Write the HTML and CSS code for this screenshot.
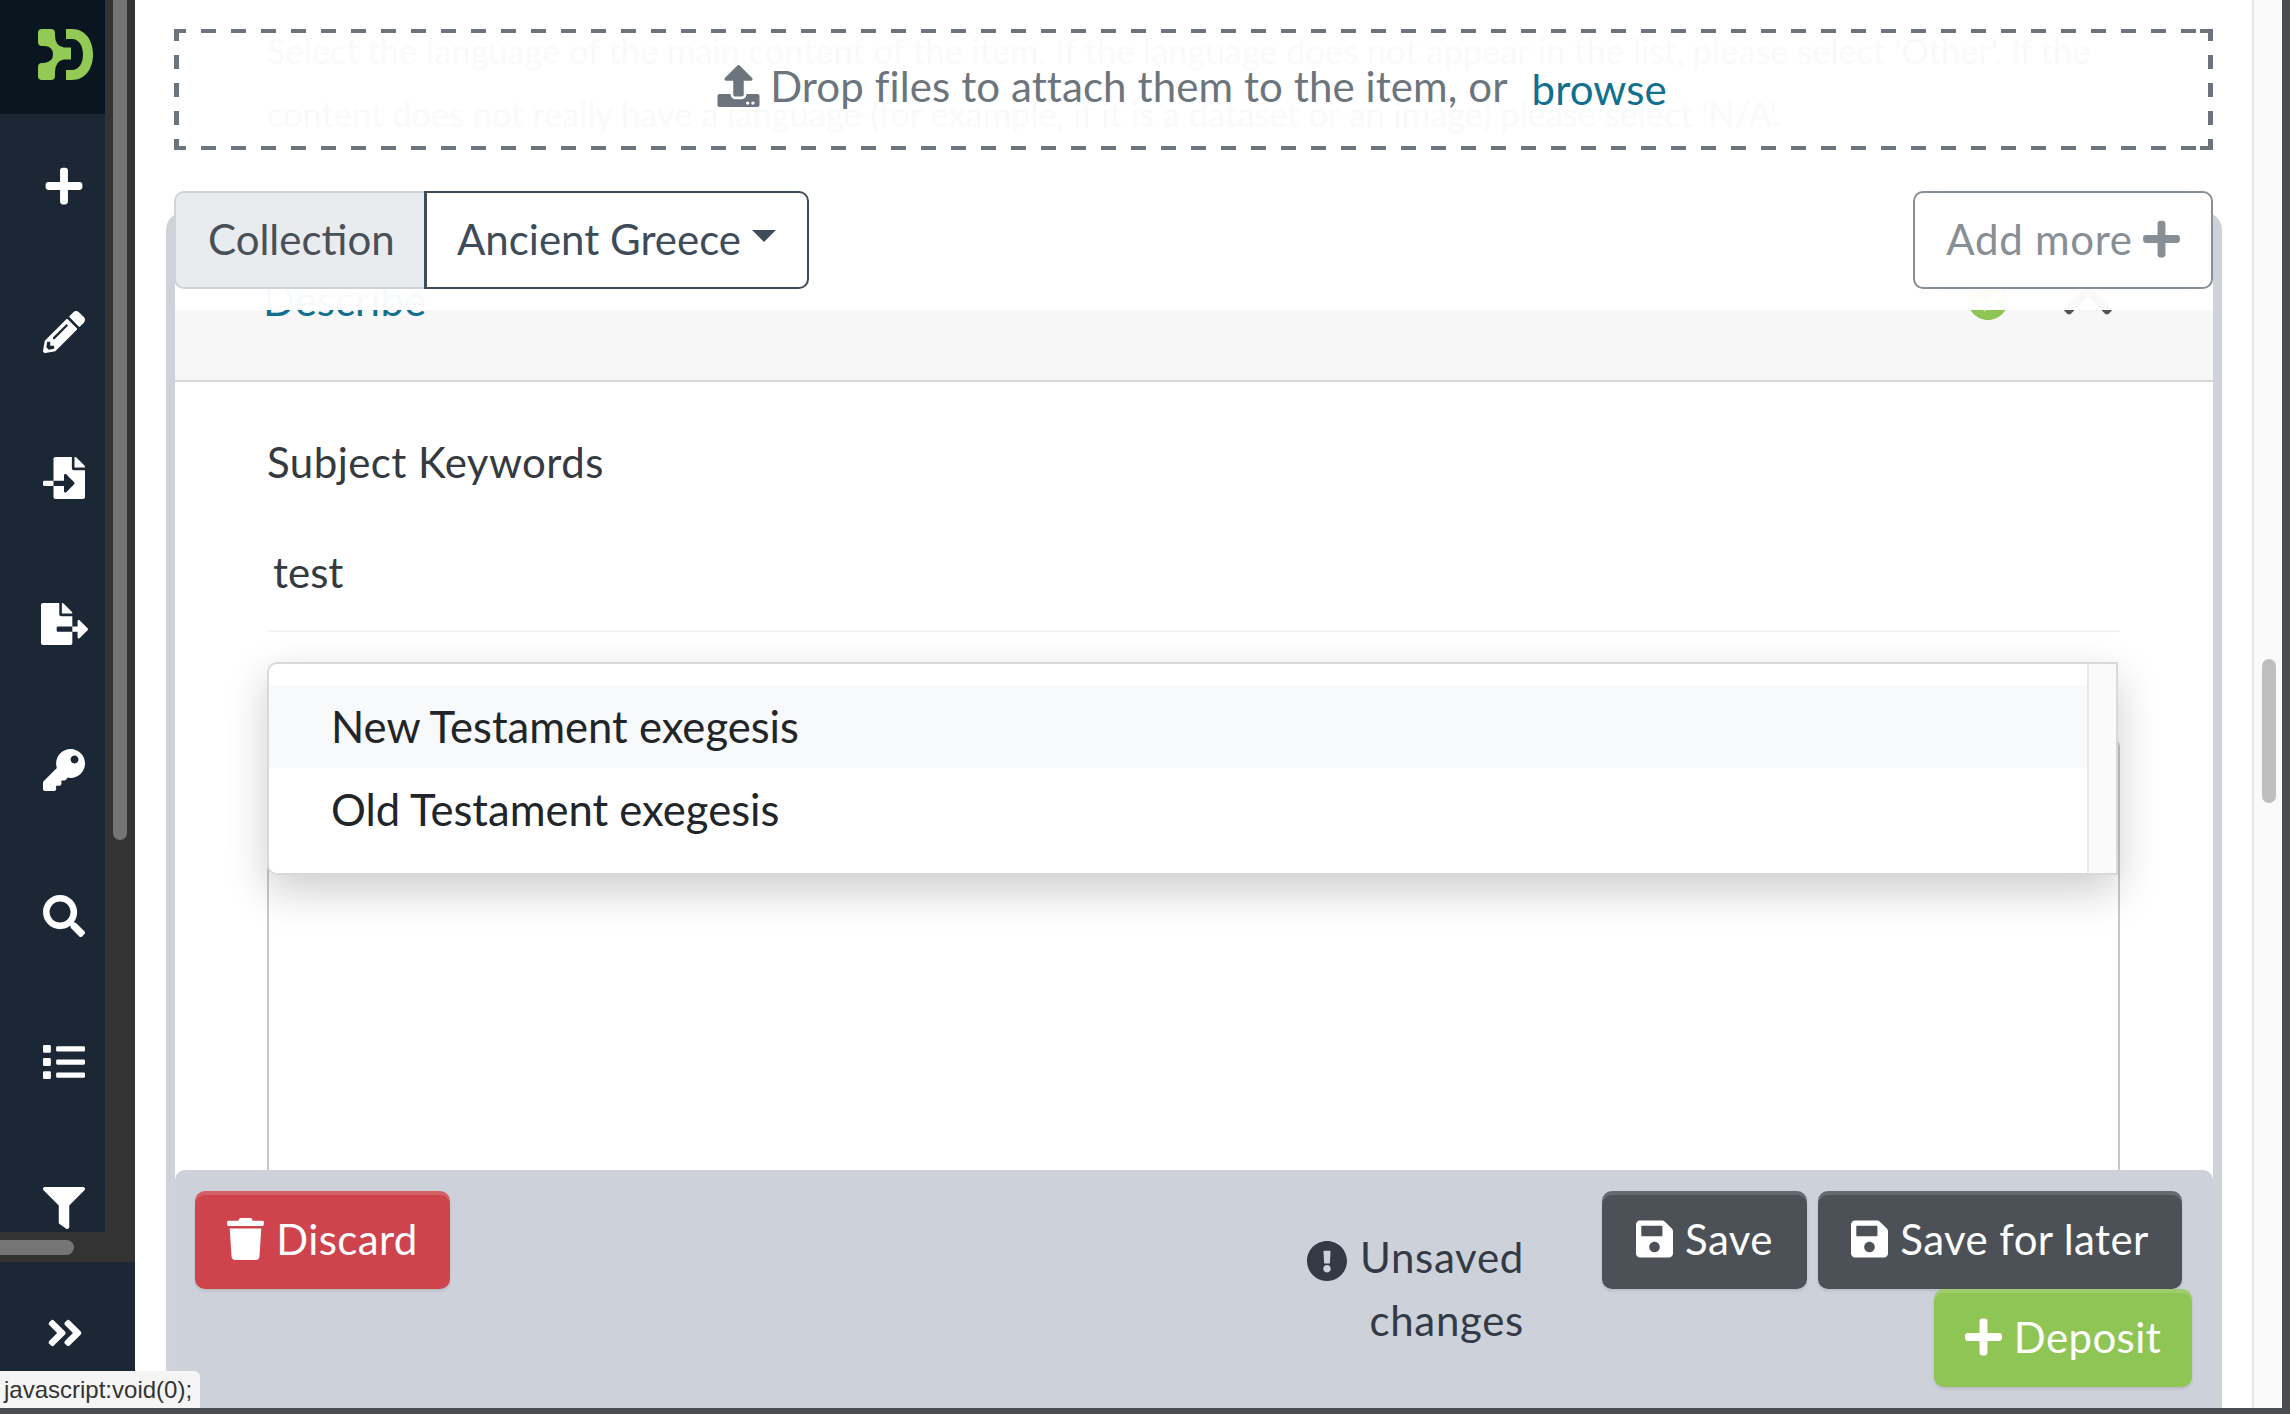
FILE: index.html
```html
<!DOCTYPE html>
<html lang="en">
<head>
	<title>Deposit item</title>
	<meta charset="utf-8">
	<link rel="stylesheet" href="styles.css">
</head>
<body>
	<div class="window">
		<aside class="sidebar">
			<div class="nav-pane">
				<nav class="nav-col">
					<div class="logo">
						<svg class="logo-mark" viewBox="38 28 56 53"><path d="M42 29H51Q55 29 55 33V36Q55 46 64 47.500H71V59.500H64Q55 61 55 72V76Q55 80 51 80H42Q38 80 38 76V67Q38 63 42 63H44Q53 62 53 54.500Q53 46 44 46H42Q38 46 38 42V33Q38 29 42 29Z"/><path d="M66 29H72C85 29 93 40 93 54.500C93 69 85 80 72 80H66V70H72C79 70 83 63 83 54.500C83 46 79 39 72 39H66Z"/></svg>
					</div>
					<ul class="nav-list">
						<li><svg class="nav-icon" viewBox="0 0 448 512"><path d="M416 208H272V64c0-17.670-14.330-32-32-32h-32c-17.670 0-32 14.330-32 32v144H32c-17.670 0-32 14.330-32 32v32c0 17.670 14.330 32 32 32h144v144c0 17.670 14.330 32 32 32h32c17.670 0 32-14.330 32-32V304h144c17.670 0 32-14.330 32-32v-32c0-17.670-14.330-32-32-32z"/></svg></li>
						<li><svg class="nav-icon" viewBox="0 0 512 512"><path d="M497.900 142.100l-46.100 46.100c-4.700 4.700-12.300 4.700-17 0l-111-111c-4.700-4.700-4.700-12.300 0-17l46.100-46.100c18.700-18.700 49.100-18.700 67.900 0l60.100 60.100c18.800 18.700 18.800 49.100 0 67.900zM284.200 99.800L21.600 362.400.4 483.900c-2.900 16.400 11.400 30.600 27.800 27.800l121.500-21.300 262.600-262.600c4.700-4.700 4.700-12.300 0-17l-111-111c-4.800-4.700-12.400-4.700-17.100 0zM124.100 339.900c-5.500-5.500-5.500-14.300 0-19.800l154-154c5.500-5.500 14.300-5.500 19.800 0s5.500 14.300 0 19.800l-154 154c-5.500 5.500-14.300 5.500-19.800 0zM88 424h48v36.300l-64.500 11.300-31.100-31.100L51.700 376H88v48z"/></svg></li>
						<li><svg class="nav-icon" viewBox="0 0 512 512"><path d="M16 288c-8.800 0-16 7.200-16 16v32c0 8.800 7.200 16 16 16h112v-64zm489-183L407.100 7c-4.500-4.500-10.600-7-17-7H384v128h128v-6.100c0-6.300-2.500-12.400-7-16.900zm-153 31V0H152c-13.300 0-24 10.700-24 24v264h128v-65.200c0-14.300 17.300-21.400 27.400-11.300L379 308c6.600 6.700 6.600 17.400 0 24l-95.700 96.400c-10.100 10.100-27.400 3-27.400-11.300V352H128v136c0 13.300 10.700 24 24 24h336c13.300 0 24-10.700 24-24V160H376c-13.200 0-24-10.800-24-24z"/></svg></li>
						<li><svg class="nav-icon wide" viewBox="0 0 576 512"><path d="M384 121.900c0-6.300-2.500-12.400-7-16.900L279.100 7c-4.500-4.500-10.600-7-17-7H256v128h128zM571 308l-95.700-96.400c-10.100-10.100-27.400-3-27.400 11.300V288h-64v64h64v65.200c0 14.300 17.300 21.400 27.400 11.300L571 332c6.600-6.600 6.600-17.400 0-24zm-379 28v-32c0-8.800 7.200-16 16-16h176V160H248c-13.200 0-24-10.800-24-24V0H24C10.700 0 0 10.700 0 24v464c0 13.300 10.700 24 24 24h336c13.300 0 24-10.700 24-24V352H208c-8.800 0-16-7.200-16-16z"/></svg></li>
						<li><svg class="nav-icon" viewBox="0 0 512 512"><path d="M512 176.001C512 273.203 433.202 352 336 352c-11.220 0-22.190-1.062-32.827-3.069l-24.012 27.014A23.999 23.999 0 0 1 261.223 384H224v40c0 13.255-10.745 24-24 24h-40v40c0 13.255-10.745 24-24 24H24c-13.255 0-24-10.745-24-24v-78.059c0-6.365 2.529-12.470 7.029-16.971l161.802-161.802C163.108 213.814 160 195.271 160 176 160 78.798 238.797.001 335.999 0 433.488-.001 512 78.511 512 176.001zM336 128c0 26.510 21.490 48 48 48s48-21.490 48-48-21.490-48-48-48-48 21.490-48 48z"/></svg></li>
						<li><svg class="nav-icon" viewBox="0 0 512 512"><path d="M505 442.700L405.300 343c-4.500-4.500-10.600-7-17-7H372c27.600-35.300 44-79.700 44-128C416 93.100 322.900 0 208 0S0 93.100 0 208s93.100 208 208 208c48.300 0 92.700-16.400 128-44v16.300c0 6.400 2.500 12.500 7 17l99.700 99.700c9.400 9.400 24.600 9.400 33.900 0l28.300-28.300c9.400-9.400 9.400-24.600.1-34zM208 336c-70.700 0-128-57.200-128-128 0-70.700 57.200-128 128-128 70.700 0 128 57.200 128 128 0 70.700-57.200 128-128 128z"/></svg></li>
						<li><svg class="nav-icon" viewBox="0 0 512 512"><path d="M80 368H16a16 16 0 0 0-16 16v64a16 16 0 0 0 16 16h64a16 16 0 0 0 16-16v-64a16 16 0 0 0-16-16zm0-320H16A16 16 0 0 0 0 64v64a16 16 0 0 0 16 16h64a16 16 0 0 0 16-16V64a16 16 0 0 0-16-16zm0 160H16a16 16 0 0 0-16 16v64a16 16 0 0 0 16 16h64a16 16 0 0 0 16-16v-64a16 16 0 0 0-16-16zm416 176H176a16 16 0 0 0-16 16v32a16 16 0 0 0 16 16h320a16 16 0 0 0 16-16v-32a16 16 0 0 0-16-16zm0-320H176a16 16 0 0 0-16 16v32a16 16 0 0 0 16 16h320a16 16 0 0 0 16-16V80a16 16 0 0 0-16-16zm0 160H176a16 16 0 0 0-16 16v32a16 16 0 0 0 16 16h320a16 16 0 0 0 16-16v-32a16 16 0 0 0-16-16z"/></svg></li>
						<li><svg class="nav-icon" viewBox="0 0 512 512"><path d="M487.976 0H24.028C2.710 0-8.047 25.866 7.058 40.971L192 225.941V432c0 7.831 3.821 15.170 10.237 19.662l80 55.980C298.020 518.690 320 507.493 320 487.980V225.941l184.947-184.970C520.021 25.896 509.338 0 487.976 0z"/></svg></li>
					</ul>
				</nav>
				<div class="nav-scroll-v"><div class="nav-thumb-v"></div></div>
				<div class="nav-scroll-h"><div class="nav-thumb-h"></div></div>
			</div>
			<div class="nav-foot">
				<svg class="nav-icon collapse" viewBox="0 0 448 512"><path d="M224.300 273l-136 136c-9.400 9.400-24.600 9.400-33.900 0l-22.600-22.600c-9.400-9.400-9.400-24.600 0-33.900l96.400-96.400-96.400-96.400c-9.400-9.400-9.400-24.600 0-33.900L54.300 103c9.400-9.400 24.600-9.400 33.900 0l136 136c9.500 9.400 9.500 24.600.1 34zm192-34l-136-136c-9.400-9.400-24.600-9.400-33.900 0l-22.600 22.600c-9.400 9.400-9.400 24.600 0 33.900l96.400 96.400-96.400 96.400c-9.400 9.400-9.400 24.600 0 33.900l22.600 22.600c9.400 9.400 24.600 9.400 33.900 0l136-136c9.400-9.200 9.400-24.400 0-33.800z"/></svg>
			</div>
		</aside>

		<main class="content">
			<div class="dropzone">
				<p class="ghost-copy">Select the language of the main content of the item. If the language does not appear in the list, please select 'Other'. If the<br>content does not really have a language (for example, if it is a dataset or an image) please select 'N/A'.</p>
				<div class="drop-label">
					<svg class="drop-icon" viewBox="0 0 512 512"><path d="M296 384h-80c-13.300 0-24-10.700-24-24V192h-87.700c-17.800 0-26.700-21.500-14.100-34.100L242.300 5.700c7.500-7.500 19.800-7.500 27.300 0l152.200 152.200c12.600 12.600 3.700 34.100-14.100 34.100H320v168c0 13.300-10.700 24-24 24zm216-8v112c0 13.300-10.700 24-24 24H24c-13.300 0-24-10.700-24-24V376c0-13.300 10.700-24 24-24h136v8c0 30.900 25.100 56 56 56h80c30.900 0 56-25.100 56-56v-8h136c13.300 0 24 10.700 24 24zm-124 88c0-11-9-20-20-20s-20 9-20 20 9 20 20 20 20-9 20-20zm64 0c0-11-9-20-20-20s-20 9-20 20 9 20 20 20 20-9 20-20z"/></svg>
					<span>Drop files to attach them to the item, or</span>
					<a class="browse">browse</a>
				</div>
			</div>

			<div class="toolbar">
				<div class="collection-group">
					<span class="group-label">Collection</span>
					<button class="group-select">Ancient Greece<i class="caret"></i></button>
				</div>
				<button class="add-more">Add more<svg class="add-icon" viewBox="0 0 448 512"><path d="M416 208H272V64c0-17.670-14.330-32-32-32h-32c-17.670 0-32 14.330-32 32v144H32c-17.670 0-32 14.330-32 32v32c0 17.670 14.330 32 32 32h144v144c0 17.670 14.330 32 32 32h32c17.670 0 32-14.330 32-32V304h144c17.670 0 32-14.330 32-32v-32c0-17.670-14.330-32-32-32z"/></svg></button>
			</div>

			<section class="panel">
				<div class="veil"></div>
				<header class="panel-head">
					<a class="panel-title">Describe</a>
					<svg class="head-check" viewBox="8 8 496 496"><path d="M504 256c0 136.967-111.033 248-248 248S8 392.967 8 256 119.033 8 256 8s248 111.033 248 248zM227.314 387.314l184-184c6.248-6.248 6.248-16.379 0-22.627l-22.627-22.627c-6.248-6.249-16.379-6.249-22.628 0L216 308.118l-70.059-70.059c-6.248-6.248-16.379-6.248-22.628 0l-22.627 22.627c-6.248 6.248-6.248 16.379 0 22.627l104 104c6.249 6.250 16.379 6.250 22.628.001z"/></svg>
					<svg class="head-chevron" viewBox="0 120 448 272"><path d="M240.971 130.524l194.343 194.343c9.373 9.373 9.373 24.569 0 33.941l-22.667 22.667c-9.357 9.357-24.522 9.375-33.901.04L224 227.495 69.255 381.516c-9.379 9.335-24.544 9.317-33.901-.04l-22.667-22.667c-9.373-9.373-9.373-24.569 0-33.941L207.030 130.525c9.372-9.373 24.568-9.373 33.941-.001z"/></svg>
				</header>
				<div class="panel-body">
					<label class="field-label">Subject Keywords</label>
					<div class="tag-field">
						<span class="tag-value">test</span>
						<ul class="suggestions">
							<li class="active">New Testament exegesis</li>
							<li>Old Testament exegesis</li>
						</ul>
					</div>
					<div class="text-box"></div>
				</div>
				<footer class="action-bar">
					<button class="btn btn-discard"><svg class="btn-icon" viewBox="0 0 448 512"><path d="M432 32H312l-9.400-18.700A24 24 0 0 0 281.100 0H166.800a23.720 23.720 0 0 0-21.400 13.300L136 32H16A16 16 0 0 0 0 48v32a16 16 0 0 0 16 16h416a16 16 0 0 0 16-16V48a16 16 0 0 0-16-16zM53.200 467a48 48 0 0 0 47.900 45h245.800a48 48 0 0 0 47.900-45L416 128H32z"/></svg>Discard</button>
					<div class="action-side">
						<p class="unsaved"><svg class="unsaved-icon" viewBox="8 8 496 496"><path d="M504 256c0 136.997-111.043 248-248 248S8 392.997 8 256C8 119.083 119.043 8 256 8s248 111.083 248 248zm-248 50c-25.405 0-46 20.595-46 46s20.595 46 46 46 46-20.595 46-46-20.595-46-46-46zm-43.673-165.346l7.418 136c.347 6.364 5.609 11.346 11.982 11.346h48.546c6.373 0 11.635-4.982 11.982-11.346l7.418-136c.375-6.874-5.098-12.654-11.982-12.654h-63.383c-6.884 0-12.356 5.780-11.981 12.654z"/></svg>Unsaved<br>changes</p>
						<div class="btn-stack">
							<div class="btn-row">
								<button class="btn btn-dark btn-save"><svg class="btn-icon" viewBox="0 32 448 448"><path d="M433.941 129.941l-83.882-83.882A48 48 0 0 0 316.118 32H48C21.490 32 0 53.490 0 80v352c0 26.510 21.490 48 48 48h352c26.510 0 48-21.490 48-48V163.882a48 48 0 0 0-14.059-33.941zM224 416c-35.346 0-64-28.654-64-64 0-35.346 28.654-64 64-64s64 28.654 64 64c0 35.346-28.654 64-64 64zm96-304.520V212c0 6.627-5.373 12-12 12H76c-6.627 0-12-5.373-12-12V108c0-6.627 5.373-12 12-12h228.520c3.183 0 6.235 1.264 8.485 3.515l3.480 3.480A11.996 11.996 0 0 1 320 111.480z"/></svg>Save</button>
								<button class="btn btn-dark btn-later"><svg class="btn-icon" viewBox="0 32 448 448"><path d="M433.941 129.941l-83.882-83.882A48 48 0 0 0 316.118 32H48C21.490 32 0 53.490 0 80v352c0 26.510 21.490 48 48 48h352c26.510 0 48-21.490 48-48V163.882a48 48 0 0 0-14.059-33.941zM224 416c-35.346 0-64-28.654-64-64 0-35.346 28.654-64 64-64s64 28.654 64 64c0 35.346-28.654 64-64 64zm96-304.520V212c0 6.627-5.373 12-12 12H76c-6.627 0-12-5.373-12-12V108c0-6.627 5.373-12 12-12h228.520c3.183 0 6.235 1.264 8.485 3.515l3.480 3.480A11.996 11.996 0 0 1 320 111.480z"/></svg>Save for later</button>
							</div>
							<button class="btn btn-deposit"><svg class="btn-icon" viewBox="0 32 448 448"><path d="M416 208H272V64c0-17.670-14.330-32-32-32h-32c-17.670 0-32 14.330-32 32v144H32c-17.670 0-32 14.330-32 32v32c0 17.670 14.330 32 32 32h144v144c0 17.670 14.330 32 32 32h32c17.670 0 32-14.330 32-32V304h144c17.670 0 32-14.330 32-32v-32c0-17.670-14.330-32-32-32z"/></svg>Deposit</button>
						</div>
					</div>
				</footer>
			</section>
		</main>

		<div class="page-scroll"><div class="page-thumb"></div></div>
		<div class="window-edge"></div>
	</div>
	<div class="status-url">javascript:void(0);</div>
</body>
</html>
```

FILE: styles.css
```css
* {
	box-sizing: border-box;
}

body {
	margin: 0;
	height: 1414px;
	overflow: hidden;
	position: relative;
	background: #4a4b50;
	font-family: "Lato", "Noto Sans", sans-serif;
	font-size: 42px;
	line-height: 63px;
	color: #343a40;
}

p, ul {
	margin: 0;
	padding: 0;
}

ul {
	list-style: none;
}

button {
	font: inherit;
	cursor: pointer;
}

.window {
	display: flex;
	height: 1408px;
	background: #fff;
}

/* sidebar */
.sidebar {
	flex: 0 0 135px;
	display: flex;
	flex-direction: column;
	background: #1b2735;
	height: 1408px;
}

.nav-pane {
	display: grid;
	grid-template-columns: 105px 30px;
	grid-template-rows: 1232px 30px;
	background: #333;
}

.nav-col {
	overflow: hidden;
	background: #1b2735;
	color: #fff;
}

.logo {
	height: 114px;
	background: #0a161f;
	display: flex;
	padding: 28px 0 0 38px;
}

.logo-mark {
	width: 56px;
	height: 53px;
	fill: #93c955;
}

.nav-list {
	margin-top: -1px;
}

.nav-list li {
	height: 146px;
	display: flex;
	align-items: center;
	justify-content: center;
	padding-left: 23px;
}

.nav-icon {
	width: 42px;
	height: 42px;
	fill: #fff;
}

.nav-icon.wide {
	width: 47px;
}

.nav-scroll-v {
	padding: 0 8px;
	background: #333;
}

.nav-thumb-v {
	height: 840px;
	background: #757575;
	border-radius: 0 0 8px 8px;
}

.nav-scroll-h {
	grid-column: 1 / 3;
	padding-top: 8px;
}

.nav-thumb-h {
	width: 74px;
	height: 15px;
	background: #757575;
	border-radius: 0 8px 8px 0;
}

.nav-foot {
	flex: 1;
	display: flex;
	justify-content: center;
	padding: 50px 5px 0 0;
}

.collapse {
	width: 40px;
	height: 42px;
}

/* main column */
.content {
	flex: 1;
	min-width: 0;
	padding: 29px 30px 0 31px;
	overflow: hidden;
}

.dropzone {
	position: relative;
	height: 121px;
	margin: 0 9px 0 8px;
	background:
		linear-gradient(#6c757d, #6c757d) right top / 13px 4px no-repeat,
		linear-gradient(#6c757d, #6c757d) right bottom / 13px 4px no-repeat,
		repeating-linear-gradient(90deg, #6c757d 0 12px, transparent 12px 27px, #6c757d 27px 30px) left top / 100% 4px no-repeat,
		repeating-linear-gradient(90deg, #6c757d 0 12px, transparent 12px 27px, #6c757d 27px 30px) left bottom / 100% 4px no-repeat,
		repeating-linear-gradient(180deg, #6c757d 0 12px, transparent 12px 26px, #6c757d 26px 28px) left top / 5px 100% no-repeat,
		repeating-linear-gradient(180deg, #6c757d 0 12px, transparent 12px 26px, #6c757d 26px 28px) right top / 5px 100% no-repeat;
	color: #6c757d;
	display: flex;
	align-items: center;
	justify-content: center;
}

.ghost-copy {
	position: absolute;
	left: 93px;
	top: -10px;
	white-space: nowrap;
	font-size: 34.400px;
	color: #f9fafa;
}

.drop-label {
	position: relative;
	display: flex;
	align-items: center;
	padding: 0 3px 7px 0;
	letter-spacing: 0.1px;
}

.drop-icon {
	width: 43px;
	height: 42px;
	margin-right: 10px;
	fill: #6c757d;
}

.browse {
	margin-left: 24px;
	padding-top: 7px;
	color: #11708f;
}

.toolbar {
	position: relative;
	z-index: 2;
	display: flex;
	justify-content: space-between;
	height: 98px;
	margin: 41px 9px 0 8px;
}

.collection-group {
	display: flex;
}

.group-label {
	display: flex;
	align-items: center;
	width: 250px;
	padding: 0 0 2px 32px;
	background: #e9ecef;
	border: 2px solid #ced4da;
	border-right: 0;
	border-radius: 10px 0 0 10px;
	color: #495057;
}

.group-select {
	display: flex;
	align-items: center;
	width: 385px;
	padding: 0 0 2px 30px;
	background: #fff;
	border: 2px solid #3e4c59;
	border-left-width: 3px;
	border-radius: 0 10px 10px 0;
	color: #3e4c59;
}

.caret {
	width: 0;
	height: 0;
	margin: -6px 0 0 11px;
	border-style: solid;
	border-width: 12px 12px 0;
	border-color: #3e4c59 transparent transparent;
}

.add-more {
	display: flex;
	align-items: center;
	justify-content: center;
	width: 300px;
	padding: 0 0 2px;
	background: #fff;
	border: 2px solid #868e96;
	border-radius: 10px;
	color: #868e96;
	letter-spacing: 0.7px;
}

.add-icon {
	width: 37px;
	height: 42px;
	margin-left: 10px;
	fill: #868e96;
}

/* form panel */
.panel {
	position: relative;
	height: 1196px;
	margin-top: -77px;
	border-left: 9px solid #ced2d9;
	border-right: 9px solid #ced2d9;
	border-radius: 18px 18px 0 0;
	overflow: hidden;
}

.veil {
	position: absolute;
	z-index: 1;
	left: 0;
	right: 0;
	top: 0;
	height: 98px;
	background: rgba(255, 255, 255, 0.97);
}

.panel-head {
	display: flex;
	align-items: center;
	height: 170px;
	padding: 8px 100px 0 88px;
	background: #f7f7f7;
	border-bottom: 2px solid #d8d8d8;
}

.panel-title {
	color: #11708f;
	flex: 1;
}

.head-check {
	width: 40px;
	height: 40px;
	fill: #8fc555;
}

.head-chevron {
	width: 50px;
	height: 30px;
	margin-left: 55px;
	fill: #555;
}

.panel-body {
	padding: 49px 93px 0 92px;
}

.field-label {
	display: block;
	letter-spacing: 0.45px;
}

.tag-field {
	position: relative;
	margin-top: 47px;
	padding: 0 6px 26px;
	border-bottom: 2px solid #f5f5f5;
}

.suggestions {
	position: absolute;
	z-index: 3;
	left: 0;
	right: 2px;
	top: calc(100% + 32px);
	height: 213px;
	padding: 21px 29px 0 0;
	background:
		linear-gradient(90deg, #fff calc(100% - 29px), #e8e8e8 calc(100% - 29px) calc(100% - 27px), #fafafa calc(100% - 27px));
	border: 2px solid #d9d9d9;
	border-radius: 10px 0 0 10px;
	box-shadow: 0 16px 44px rgba(0, 0, 0, 0.2);
	font-size: 43.600px;
	color: #212529;
}

.suggestions li {
	height: 83px;
	padding: 10px 0 0 62px;
}

.suggestions li.active {
	background: #f8f9fa;
}

.text-box {
	height: 600px;
	margin-top: 105px;
	border: 2px solid #c5c9ce;
	border-radius: 10px;
}

.action-bar {
	position: absolute;
	z-index: 2;
	left: 0;
	right: 0;
	bottom: 0;
	height: 238px;
	display: flex;
	justify-content: space-between;
	padding: 21px 21px 0 20px;
	background: #cdd2da;
	border-radius: 10px 10px 0 0;
}

.btn {
	display: flex;
	align-items: center;
	justify-content: center;
	height: 98px;
	padding: 0 0 2px;
	border: 0;
	border-radius: 10px;
	color: #fff;
	letter-spacing: 0.4px;
	box-shadow: inset 0 4px 0 rgba(255, 255, 255, 0.15), 0 2px 3px rgba(0, 0, 0, 0.1);
}

.btn-icon {
	width: 37px;
	height: 42px;
	margin-right: 12px;
	fill: #fff;
}

.btn-discard {
	width: 255px;
	background: #ce434c;
}

.action-side {
	display: flex;
	align-items: flex-start;
}

.unsaved {
	width: 230px;
	margin: 35px 78px 0 0;
	text-align: right;
	letter-spacing: 0.7px;
	color: #343a45;
}

.unsaved-icon {
	width: 40px;
	height: 40px;
	margin-right: 13px;
	vertical-align: -8px;
	fill: #343a45;
}

.btn-stack {
	display: flex;
	flex-direction: column;
	align-items: flex-end;
}

.btn-row {
	display: flex;
	gap: 11px;
	margin-right: 10px;
}

.btn-dark {
	background: #4c5157;
}

.btn-save {
	width: 205px;
}

.btn-later {
	width: 364px;
}

.btn-deposit {
	width: 258px;
	background: #8fc555;
}

/* page scrollbar */
.page-scroll {
	flex: 0 0 30px;
	padding: 659px 6px 0 8px;
	background: #fafafa;
	border-left: 2px solid #e8e8e8;
}

.page-thumb {
	height: 144px;
	background: #bfbfbf;
	border-radius: 8px;
}

.window-edge {
	flex: 0 0 8px;
	background: #4a4b50;
}

.status-url {
	position: absolute;
	z-index: 5;
	left: 0;
	top: 1371px;
	width: 200px;
	height: 37px;
	padding-left: 4px;
	background: #f5f5f5;
	border-radius: 0 6px 0 0;
	font-family: "Liberation Sans", sans-serif;
	font-size: 24px;
	line-height: 37px;
	color: #333;
}
```
